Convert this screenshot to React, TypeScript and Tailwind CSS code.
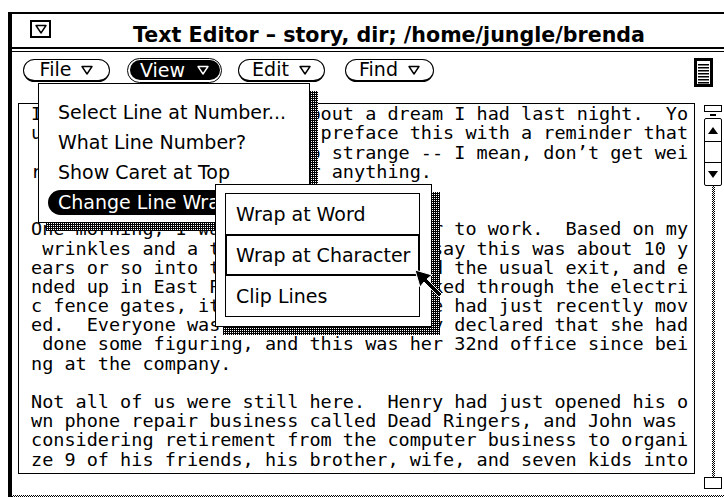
import React from 'react';

const lines = [
  'I want to write a story about a dream I had last night.  Yo',
  'u should know that I will preface this with a reminder that',
  ' the following might be so strange -- I mean, don’t get wei',
  'rd out about the dream, or anything.',
  '',
  '',
  'One morning, I was driving my new car to work.  Based on my',
  ' wrinkles and a tired look, I would say this was about 10 y',
  'ears or so into the future.  I missed the usual exit, and e',
  'nded up in East Palo Alto, and I walked through the electri',
  'c fence gates, it appeared our office had just recently mov',
  'ed.  Everyone was there.  My boss Kay declared that she had',
  ' done some figuring, and this was her 32nd office since bei',
  'ng at the company.',
  '',
  'Not all of us were still here.  Henry had just opened his o',
  'wn phone repair business called Dead Ringers, and John was ',
  'considering retirement from the computer business to organi',
  'ze 9 of his friends, his brother, wife, and seven kids into',
];

const DownTri = ({ white }: { white?: boolean }) => (
  <svg width="12" height="10" viewBox="0 0 12 10">
    <path d="M1 1.5 H11 L6 9 Z" fill="none" stroke={white ? '#fff' : '#000'} strokeWidth="1.4" strokeLinejoin="round" />
  </svg>
);

const Button = ({ label, className }: { label: string; className: string }) => (
  <div className={`h-[23px] rounded-full border-[1.5px] border-black border-b-2 flex items-center justify-center gap-[10px] text-[19px] leading-none ${className}`}>
    <span>{label}</span>
    <DownTri />
  </div>
);

const DocIcon = () => (
  <svg width="19" height="29" viewBox="0 0 19 29">
    <rect x="0" y="0" width="19" height="29" fill="#000" />
    <rect x="3" y="3" width="13" height="23" fill="#fff" />
    {[6, 9, 12, 15, 18, 21, 24].map((y) => (
      <rect key={y} x="4" y={y} width="11" height="1.5" fill="#000" />
    ))}
  </svg>
);

export default function App() {
  return (
    <div className="relative w-[724px] h-[497px] overflow-hidden bg-white text-black font-['DejaVu_Sans',sans-serif]">
      {/* window frame */}
      <div className="ml-[8px] mt-[12px] w-[716px] h-[485px] border-l-[4px] border-t-[2px] border-black flex flex-col">
        {/* title bar */}
        <div className="h-[34px] flex items-start">
          <div className="ml-[18px] mt-[6px] w-[21px] h-[18px] border-2 border-black flex items-center justify-center">
            <DownTri />
          </div>
          <div className="ml-[82px] mt-[9px] text-[20.6px] leading-[24px] font-bold whitespace-nowrap">
            Text Editor – story, dir; /home/jungle/brenda
          </div>
        </div>
        <div className="h-[2px] bg-black" />
        <div className="h-[1px] mt-[2px] bg-black" />

        {/* control area */}
        <div className="h-[57px] flex items-start pt-[7px]">
          <Button label="File" className="ml-[11px] w-[87px]" />
          <div className="ml-[17px] w-[95px] h-[25px] -mt-[1px] rounded-full border-[1.5px] border-black p-[1.5px]">
            <div className="h-full rounded-full bg-black text-white flex items-center justify-center gap-[12px] text-[19px] leading-none">
              <span>View</span>
              <DownTri white />
            </div>
          </div>
          <Button label="Edit" className="ml-[16px] w-[87px]" />
          <Button label="Find" className="ml-[20px] w-[89px]" />
          <div className="ml-auto mr-[11px] -mt-[1px]">
            <DocIcon />
          </div>
        </div>

        {/* text pane + scrollbar */}
        <div className="flex items-start">
          <div className="ml-[6px] w-[677px] h-[371px] border border-black pl-[12px] overflow-hidden font-['DejaVu_Sans_Mono',monospace] text-[18.5px]">
            {lines.map((l, i) => (
              <div key={i} className="h-[19.2px] leading-[19.2px] whitespace-pre">
                {l}
              </div>
            ))}
          </div>

          <div className="ml-[9px] w-[18px] flex flex-col items-center">
            <div className="mt-[2px] w-[18px] h-[7px] border border-black" />
            <div className="mt-[2px] w-[6px] h-[2px] bg-black" />
            <div className="mt-[2px] w-[18px] h-[68px] border border-black rounded-[2px] flex flex-col">
              <div className="h-[23px] border-b border-black flex items-center justify-center">
                <svg width="10" height="7" viewBox="0 0 10 7"><path d="M0 7 L5 0 L10 7 Z" fill="#000" /></svg>
              </div>
              <div className="h-[21px] border-b border-black" />
              <div className="flex-1 flex items-center justify-center">
                <svg width="10" height="7" viewBox="0 0 10 7"><path d="M0 0 L5 7 L10 0 Z" fill="#000" /></svg>
              </div>
            </div>
            <div className="w-[3px] h-[291px] bg-[repeating-conic-gradient(#000_0%_25%,#fff_0%_50%)] bg-[length:2px_2px]" />
            <div className="w-[18px] h-[12px] border border-black" />
          </div>
        </div>
        <div className="mt-[6px] h-[2px] bg-[repeating-conic-gradient(#000_0%_25%,#fff_0%_50%)] bg-[length:2px_2px]" />
      </div>

      {/* View menu */}
      <div className="absolute left-[46px] top-[91px] w-[272px] h-[140px] bg-[conic-gradient(#fff_0%_25%,#000_0%_100%)] bg-[length:2px_2px]" />
      <div className="absolute left-[38px] top-[83px] w-[272px] h-[140px] bg-white border border-black pt-[13px] text-[19px] leading-none">
        <div className="h-[30px] flex items-center pl-[19px] whitespace-nowrap">Select Line at Number...</div>
        <div className="h-[30px] flex items-center pl-[19px] whitespace-nowrap">What Line Number?</div>
        <div className="h-[30px] flex items-center pl-[19px] whitespace-nowrap">Show Caret at Top</div>
        <div className="h-[30px] flex items-center pl-[9px]">
          <div className="w-[255px] h-[25px] bg-black text-white rounded-l-full pl-[10px] flex items-center justify-between pr-[8px] whitespace-nowrap">
            <span>Change Line Wrap</span>
            <svg width="7" height="10" viewBox="0 0 7 10"><path d="M0 0 L7 5 L0 10 Z" fill="#fff" /></svg>
          </div>
        </div>
      </div>

      {/* Change Line Wrap submenu */}
      <div className="absolute left-[223px] top-[192px] w-[217px] h-[143px] bg-[conic-gradient(#fff_0%_25%,#000_0%_100%)] bg-[length:2px_2px]" />
      <div className="absolute left-[215px] top-[184px] w-[217px] h-[143px] bg-white border border-black pl-[9px] pt-[8px] text-[19px] leading-none">
        <div className="w-[195px] h-[42px] border border-black flex items-center pl-[10px] whitespace-nowrap">Wrap at Word</div>
        <div className="w-[195px] h-[42px] -mt-[1px] border-2 border-black flex items-center pl-[9px] whitespace-nowrap">Wrap at Character</div>
        <div className="w-[195px] h-[42px] -mt-[1px] border border-black flex items-center pl-[10px] whitespace-nowrap">Clip Lines</div>
      </div>

      {/* pointer */}
      <svg className="absolute left-[412px] top-[267px]" width="34" height="34" viewBox="0 0 34 34">
        <path d="M3 3 L20 8 L15 12 L30 27 L27 30 L12 15 L8 20 Z" fill="#000" stroke="#fff" strokeWidth="1" />
      </svg>
    </div>
  );
}
